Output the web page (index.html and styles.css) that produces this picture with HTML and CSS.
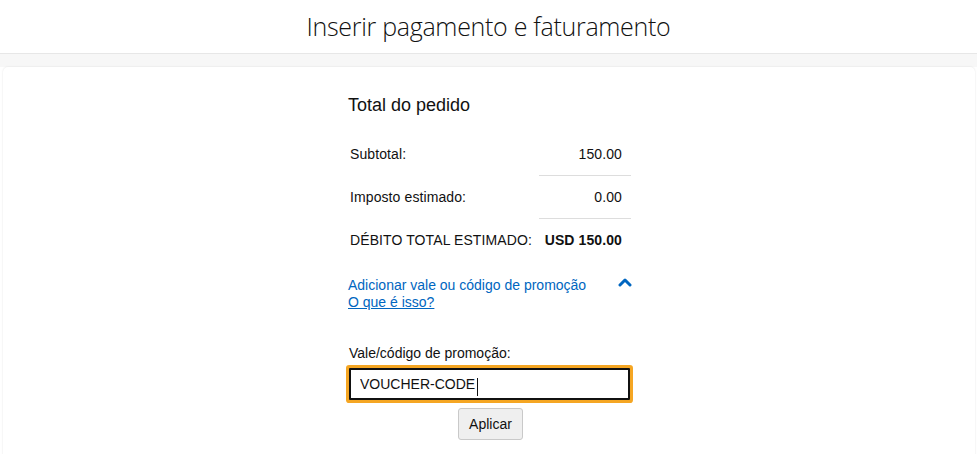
FILE: index.html
```html
<!DOCTYPE html>
<html lang="pt">
<head>
<meta charset="utf-8">
<title>Inserir pagamento e faturamento</title>
<link rel="stylesheet" href="styles.css">
</head>
<body>
<header class="top">
  <h1 class="top-title">Inserir pagamento e faturamento</h1>
</header>
<div class="band"></div>
<main class="card">
  <section class="summary">
    <h2 class="summary-title">Total do pedido</h2>
    <div class="row">
      <span class="label">Subtotal:</span>
      <span class="value line">150.00</span>
    </div>
    <div class="row">
      <span class="label">Imposto estimado:</span>
      <span class="value line">0.00</span>
    </div>
    <div class="row">
      <span class="label">DÉBITO TOTAL ESTIMADO:</span>
      <span class="value total">USD 150.00</span>
    </div>
    <div class="promo-head">
      <div class="promo-links">
        <a class="promo-toggle" href="#">Adicionar vale ou código de promoção</a>
        <a class="promo-help" href="#">O que é isso?</a>
      </div>
      <svg class="chevron" width="14" height="10" viewBox="0 0 14 10"><polyline points="2,8 7,3 12,8" fill="none" stroke="#0066c0" stroke-width="3" stroke-linecap="round" stroke-linejoin="round"/></svg>
    </div>
    <label class="field-label" for="voucher">Vale/código de promoção:</label>
    <div class="field">
      <input id="voucher" class="field-input" type="text" value="VOUCHER-CODE">
      <span class="caret"></span>
    </div>
    <div class="actions">
      <button class="btn" type="button">Aplicar</button>
    </div>
  </section>
</main>
</body>
</html>
```
FILE: styles.css
```css
html, body {
  margin: 0;
  padding: 0;
  background: #ffffff;
  font-family: "Liberation Sans", Arial, sans-serif;
  color: #111111;
  overflow: hidden;
}
.top {
  height: 53px;
  border-bottom: 1px solid #e7e7e7;
  display: flex;
  align-items: center;
  justify-content: center;
  background: #fff;
}
.top-title {
  margin: 0;
  font-family: "Open Sans", sans-serif;
  font-weight: 300;
  font-size: 25px;
  letter-spacing: -0.3px;
  color: #111;
  padding-bottom: 1px;
}
.band {
  height: 13px;
  background: #f7f7f7;
}
.card {
  background: #fff;
  margin: 0 2px 0 3px;
  border-radius: 5px 5px 0 0;
  box-shadow: 0 0 2px rgba(0,0,0,0.12);
  height: 400px;
  display: flex;
  justify-content: center;
}
.summary {
  width: 284px;
  padding-top: 26px;
  font-size: 14px;
}
.summary-title {
  margin: 0 0 16px 1px;
  font-size: 18px;
  font-weight: 400;
  line-height: 24px;
  color: #111;
}
.row {
  display: flex;
  justify-content: space-between;
  padding-left: 3px;
  letter-spacing: 0.1px;
}
.label {
  line-height: 20px;
  padding: 11px 0;
}
.value {
  box-sizing: border-box;
  width: 92px;
  text-align: right;
  line-height: 20px;
  padding: 11px 9px 11px 0;
}
.value.line {
  border-bottom: 1px solid #dddddd;
}
.value.total {
  font-weight: 700;
}
.promo-head {
  display: flex;
  justify-content: space-between;
  align-items: flex-start;
  margin-top: 16px;
  padding-left: 1px;
}
.promo-links {
  display: flex;
  flex-direction: column;
  line-height: 17px;
}
.promo-toggle {
  color: #0066c0;
  text-decoration: none;
}
.promo-help {
  color: #0066c0;
  text-decoration: underline;
  align-self: flex-start;
}
.chevron {
  margin-right: -1px;
}
.field-label {
  display: block;
  margin-top: 34px;
  padding-left: 2px;
  line-height: 17px;
  color: #111;
}
.field {
  position: relative;
  margin: 6px -1px 0 -1px;
}
.field-input {
  display: block;
  box-sizing: border-box;
  width: 281px;
  height: 32px;
  margin: 3px;
  border: 2px solid #111;
  border-radius: 1px;
  box-shadow: 0 0 0 3px #f5a623;
  padding: 0 0 0 9px;
  font-family: "Liberation Sans", Arial, sans-serif;
  font-size: 14px;
  color: #111;
  outline: none;
  background: #fff;
}
.caret {
  position: absolute;
  left: 131px;
  top: 10px;
  width: 1px;
  height: 18px;
  background: #111;
}
.actions {
  display: flex;
  justify-content: center;
  margin-top: 8px;
  padding-left: 3px;
}
.btn {
  font-family: "Liberation Sans", Arial, sans-serif;
  font-size: 14px;
  color: #111;
  background: #efefef;
  border: 1px solid #c9c9c9;
  border-radius: 3px;
  height: 32px;
  padding: 0 10px;
}
```
